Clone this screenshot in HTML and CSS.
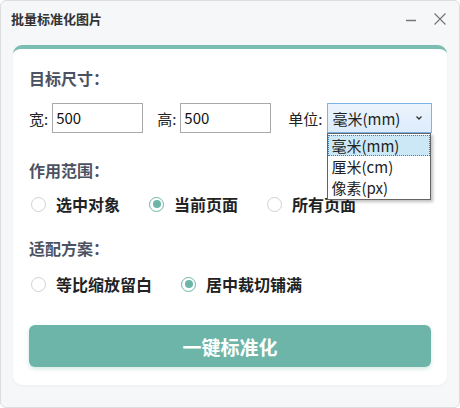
FILE: index.html
```html
<!DOCTYPE html>
<html>
<head>
  <title>批量标准化图片</title>
  <link rel="stylesheet" href="styles.css">
</head>
<body>
  <div class="window">
    <div class="titlebar">
      <span class="title">批量标准化图片</span>
      <div class="controls">
        <svg width="14" height="14" viewBox="0 0 14 14"><path d="M2 8.5h10" stroke="#777" stroke-width="1.4"/></svg>
        <svg width="14" height="14" viewBox="0 0 14 14"><path d="M1.5 1.5l11 11M12.5 1.5l-11 11" stroke="#777" stroke-width="1.2"/></svg>
      </div>
    </div>

    <div class="card">
      <h2 class="heading">目标尺寸：</h2>
      <div class="size-row">
        <label>宽:</label>
        <div class="textbox">500</div>
        <label class="gap">高:</label>
        <div class="textbox">500</div>
        <label class="gap-unit">单位:</label>
        <div class="select-wrap">
          <div class="select">
            <span>毫米(mm)</span>
            <svg width="8" height="6" viewBox="0 0 8 6"><path d="M1.5 1.5l2.5 2.5 2.5-2.5" fill="none" stroke="#333" stroke-width="1.3"/></svg>
          </div>
          <ul class="dropdown">
            <li class="active">毫米(mm)</li>
            <li>厘米(cm)</li>
            <li>像素(px)</li>
          </ul>
        </div>
      </div>

      <h2 class="heading scope">作用范围：</h2>
      <div class="radio-row">
        <div class="radio"><span class="dot"></span>选中对象</div>
        <div class="radio checked"><span class="dot"></span>当前页面</div>
        <div class="radio"><span class="dot"></span>所有页面</div>
      </div>

      <h2 class="heading fit">适配方案：</h2>
      <div class="radio-row">
        <div class="radio"><span class="dot"></span>等比缩放留白</div>
        <div class="radio checked"><span class="dot"></span>居中裁切铺满</div>
      </div>

      <button class="run">一键标准化</button>
    </div>
  </div>
</body>
</html>
```

FILE: styles.css
```css
body {
  margin: 0;
  font-family: "Noto Sans CJK SC", "Noto Sans", sans-serif;
}

.window {
  width: 458px;
  height: 406px;
  border: 1px solid #dcdde0;
  border-radius: 6px;
  background-color: #f6f7f9;
  overflow: hidden;
}

.titlebar {
  height: 35px;
  display: flex;
  align-items: center;
  justify-content: space-between;
  padding: 0 12px 0 10px;
}

.title {
  font-size: 13px;
  font-weight: bold;
  color: #333;
}

.controls {
  display: flex;
  gap: 15px;
  align-items: center;
}

.card {
  margin: 9px 12px 0 12px;
  border-top: 4px solid #7bbdb1;
  border-radius: 9px;
  background-color: #fff;
  padding: 18px 16px 18px 16px;
  box-shadow: 0 1px 3px rgba(0, 0, 0, 0.04);
}

.heading {
  margin: 0;
  font-size: 16px;
  line-height: 22px;
  font-weight: bold;
  color: #4c5262;
}

.scope {
  margin-top: 26px;
}

.fit {
  margin-top: 22px;
}

.size-row {
  display: flex;
  align-items: center;
  margin-top: 14px;
  font-size: 15px;
  color: #222;
  white-space: nowrap;
}

.size-row label {
  margin-right: 4px;
  flex-shrink: 0;
}

.size-row .gap {
  margin-left: 14px;
}

.size-row .gap-unit {
  margin-left: 17px;
}

.textbox {
  width: 86px;
  height: 28px;
  border: 1px solid #a9a9a9;
  padding-left: 3px;
  line-height: 28px;
  font-size: 15px;
  color: #111;
  flex-shrink: 0;
}

.select-wrap {
  position: relative;
  flex-shrink: 0;
}

.select {
  width: 90px;
  height: 28px;
  border: 1px solid #7eb4ea;
  background: linear-gradient(#ecf4fc, #dcecfc);
  padding: 0 8px 0 5px;
  display: flex;
  align-items: center;
  justify-content: space-between;
  font-size: 15px;
  color: #222;
}

.dropdown {
  position: absolute;
  top: 30px;
  left: 0;
  width: 102px;
  margin: 0;
  padding: 1px 0;
  list-style: none;
  background-color: #fff;
  border: 1px solid #646464;
  box-shadow: 2px 2px 3px rgba(0, 0, 0, 0.25);
  font-size: 15px;
  color: #222;
}

.dropdown li {
  height: 21px;
  line-height: 21px;
  padding-left: 4px;
}

.dropdown li.active {
  background-color: #cce8f6;
  outline: 1px dotted #3b7fb4;
  outline-offset: -1px;
}

.radio-row {
  display: flex;
  gap: 27px;
  margin-top: 12px;
  font-size: 16px;
  font-weight: bold;
  color: #222;
}

.fit + .radio-row {
  margin-top: 14px;
}

.radio {
  display: flex;
  align-items: center;
  gap: 10px;
  line-height: 22px;
  padding-left: 2px;
}

.dot {
  width: 13px;
  height: 13px;
  border: 1.5px solid #cfd1d5;
  border-radius: 50%;
  box-sizing: content-box;
  position: relative;
}

.checked .dot {
  border-color: #6db5a8;
}

.checked .dot::after {
  content: "";
  position: absolute;
  left: 2.5px;
  top: 2.5px;
  width: 8px;
  height: 8px;
  border-radius: 50%;
  background-color: #6db5a8;
}

.run {
  display: block;
  width: 100%;
  height: 42px;
  margin-top: 30px;
  border: none;
  border-radius: 6px;
  background-color: #6db5a8;
  color: #fff;
  font-family: inherit;
  font-size: 19px;
  font-weight: bold;
  box-shadow: 0 2px 4px rgba(109, 181, 168, 0.3);
}
```
